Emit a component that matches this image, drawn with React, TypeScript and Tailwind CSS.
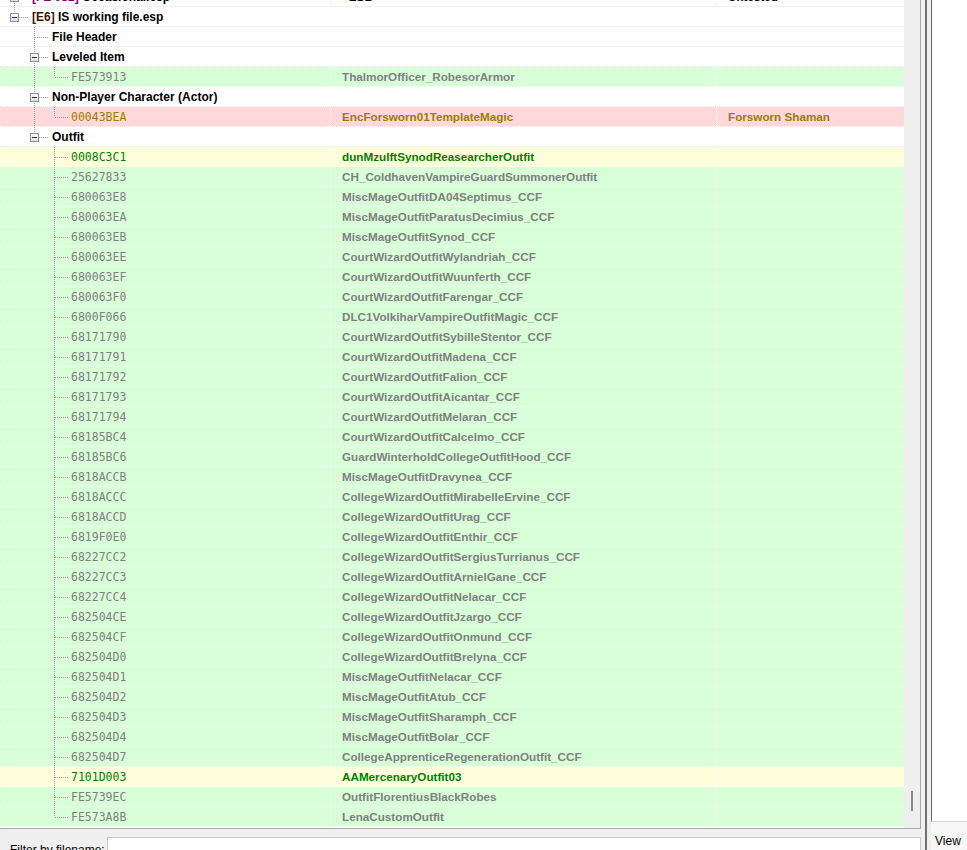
import React from 'react';

type Tone = 'white' | 'header' | 'green' | 'red' | 'yellow';

interface TreeRow {
  level: number;
  ancestors: boolean[];
  last: boolean;
  expander?: boolean;
  label?: React.ReactNode;
  id?: string;
  name?: string;
  extra?: string;
  tone: Tone;
}

const toneStyles: Record<Tone, { bg: string; sep: string; div: string; text: string }> = {
  white: { bg: 'bg-white', sep: 'border-[#e4e4e4]', div: 'border-[#e4e4e4]', text: 'text-black' },
  header: { bg: 'bg-white', sep: 'border-[#e4e4e4]', div: 'border-transparent', text: 'text-black' },
  green: { bg: 'bg-[#d9ffd9]', sep: 'border-white', div: 'border-white', text: 'text-[#808080]' },
  red: { bg: 'bg-[#ffd9d9]', sep: 'border-white', div: 'border-white', text: 'text-[#9b7d00]' },
  yellow: { bg: 'bg-[#ffffdc]', sep: 'border-white', div: 'border-white', text: 'text-[#008000]' },
};

const outfits: [string, string][] = [
  ['25627833', 'CH_ColdhavenVampireGuardSummonerOutfit'],
  ['680063E8', 'MiscMageOutfitDA04Septimus_CCF'],
  ['680063EA', 'MiscMageOutfitParatusDecimius_CCF'],
  ['680063EB', 'MiscMageOutfitSynod_CCF'],
  ['680063EE', 'CourtWizardOutfitWylandriah_CCF'],
  ['680063EF', 'CourtWizardOutfitWuunferth_CCF'],
  ['680063F0', 'CourtWizardOutfitFarengar_CCF'],
  ['6800F066', 'DLC1VolkiharVampireOutfitMagic_CCF'],
  ['68171790', 'CourtWizardOutfitSybilleStentor_CCF'],
  ['68171791', 'CourtWizardOutfitMadena_CCF'],
  ['68171792', 'CourtWizardOutfitFalion_CCF'],
  ['68171793', 'CourtWizardOutfitAicantar_CCF'],
  ['68171794', 'CourtWizardOutfitMelaran_CCF'],
  ['68185BC4', 'CourtWizardOutfitCalcelmo_CCF'],
  ['68185BC6', 'GuardWinterholdCollegeOutfitHood_CCF'],
  ['6818ACCB', 'MiscMageOutfitDravynea_CCF'],
  ['6818ACCC', 'CollegeWizardOutfitMirabelleErvine_CCF'],
  ['6818ACCD', 'CollegeWizardOutfitUrag_CCF'],
  ['6819F0E0', 'CollegeWizardOutfitEnthir_CCF'],
  ['68227CC2', 'CollegeWizardOutfitSergiusTurrianus_CCF'],
  ['68227CC3', 'CollegeWizardOutfitArnielGane_CCF'],
  ['68227CC4', 'CollegeWizardOutfitNelacar_CCF'],
  ['682504CE', 'CollegeWizardOutfitJzargo_CCF'],
  ['682504CF', 'CollegeWizardOutfitOnmund_CCF'],
  ['682504D0', 'CollegeWizardOutfitBrelyna_CCF'],
  ['682504D1', 'MiscMageOutfitNelacar_CCF'],
  ['682504D2', 'MiscMageOutfitAtub_CCF'],
  ['682504D3', 'MiscMageOutfitSharamph_CCF'],
  ['682504D4', 'MiscMageOutfitBolar_CCF'],
  ['682504D7', 'CollegeApprenticeRegenerationOutfit_CCF'],
];

const rows: TreeRow[] = [
  {
    level: 0,
    ancestors: [],
    last: false,
    expander: true,
    tone: 'white',
    label: (
      <>
        <span className="text-[#800080]">[FE 982]</span> Occasional.esp
      </>
    ),
    name: '<ESL>',
    extra: 'Untested',
  },
  {
    level: 0,
    ancestors: [],
    last: true,
    expander: true,
    tone: 'header',
    label: (
      <>
        <span className="text-[#3a1800]">[E6]</span> IS working file.esp
      </>
    ),
  },
  { level: 1, ancestors: [false], last: false, tone: 'header', label: 'File Header' },
  { level: 1, ancestors: [false], last: false, expander: true, tone: 'header', label: 'Leveled Item' },
  { level: 2, ancestors: [false, true], last: true, tone: 'green', id: 'FE573913', name: 'ThalmorOfficer_RobesorArmor' },
  { level: 1, ancestors: [false], last: false, expander: true, tone: 'header', label: 'Non-Player Character (Actor)' },
  {
    level: 2,
    ancestors: [false, true],
    last: true,
    tone: 'red',
    id: '00043BEA',
    name: 'EncForsworn01TemplateMagic',
    extra: 'Forsworn Shaman',
  },
  { level: 1, ancestors: [false], last: true, expander: true, tone: 'header', label: 'Outfit' },
  { level: 2, ancestors: [false, false], last: false, tone: 'yellow', id: '0008C3C1', name: 'dunMzulftSynodReasearcherOutfit' },
  ...outfits.map(([id, name]) => ({ level: 2, ancestors: [false, false], last: false, tone: 'green' as Tone, id, name })),
  { level: 2, ancestors: [false, false], last: false, tone: 'yellow', id: '7101D003', name: 'AAMercenaryOutfit03' },
  { level: 2, ancestors: [false, false], last: false, tone: 'green', id: 'FE5739EC', name: 'OutfitFlorentiusBlackRobes' },
  { level: 2, ancestors: [false, false], last: true, tone: 'green', id: 'FE573A8B', name: 'LenaCustomOutfit' },
];

const Ancestor = ({ on }: { on: boolean }) => (
  <svg width="20" height="20" className="shrink-0 self-start" shapeRendering="crispEdges">
    {on && <line x1="10.5" y1="0" x2="10.5" y2="20" stroke="#a0a0a0" strokeDasharray="1 1" />}
  </svg>
);

const Connector = ({ last, expander }: { last: boolean; expander?: boolean }) => (
  <svg width="24" height="20" className="shrink-0 self-start" shapeRendering="crispEdges">
    <defs>
      <linearGradient id="boxfill" x1="0" y1="0" x2="0" y2="1">
        <stop offset="0" stopColor="#ffffff" />
        <stop offset="1" stopColor="#dcdcdc" />
      </linearGradient>
    </defs>
    <line x1="10.5" y1="0" x2="10.5" y2="10" stroke="#a0a0a0" strokeDasharray="1 1" />
    {!last && <line x1="10.5" y1="10" x2="10.5" y2="20" stroke="#a0a0a0" strokeDasharray="1 1" />}
    <line x1="11" y1="10.5" x2="24" y2="10.5" stroke="#a0a0a0" strokeDasharray="1 1" />
    {expander && (
      <>
        <rect x="6.5" y="6.5" width="8" height="8" fill="url(#boxfill)" stroke="#8e8f8f" />
        <line x1="8" y1="10.5" x2="13" y2="10.5" stroke="#25324a" />
      </>
    )}
  </svg>
);

const Row = ({ row }: { row: TreeRow }) => {
  const t = toneStyles[row.tone];
  return (
    <div className={`flex h-5 border-b border-dotted ${t.bg} ${t.sep}`}>
      <div className="flex w-[330px] shrink-0 items-center pl-1">
        {row.ancestors.map((on, i) => (
          <Ancestor key={i} on={on} />
        ))}
        <Connector last={row.last} expander={row.expander} />
        {row.label !== undefined ? (
          <span className="whitespace-nowrap pl-[4px] text-[12px] font-bold text-black">{row.label}</span>
        ) : (
          <span className={`mt-[2px] pl-[3px] font-['DejaVu_Sans_Mono',monospace] text-[11.5px] ${t.text}`}>{row.id}</span>
        )}
      </div>
      <div className={`flex w-[386px] shrink-0 items-center border-l border-dotted pl-[11px] ${t.div}`}>
        <span className={`whitespace-nowrap text-[11.7px] font-bold ${t.text}`}>{row.name}</span>
      </div>
      <div className={`flex flex-1 items-center border-l border-dotted pl-[11px] ${t.div}`}>
        <span className={`whitespace-nowrap text-[11.7px] font-bold ${t.text}`}>{row.extra}</span>
      </div>
    </div>
  );
};

export default function App() {
  return (
    <div className="flex h-[850px] w-[967px] overflow-hidden bg-[#f0f0f0] font-['Liberation_Sans',Arial,sans-serif]">
      <div className="flex w-[921px] shrink-0 flex-col">
        <div className="flex h-[829px] shrink-0 border-b border-r border-[#a8a8a8] bg-white">
          <div className="w-[904px] overflow-hidden">
            <div className="-mt-[13px]">
              {rows.map((r, i) => (
                <Row key={i} row={r} />
              ))}
            </div>
          </div>
          <div className="flex w-4 flex-col items-center justify-end bg-[#efefef] pb-[17px]">
            <div className="h-5 w-[2px] bg-[#8a8a8a]" />
          </div>
        </div>
        <div className="flex items-start pl-[10px] pt-[8px]">
          <span className="w-[97px] pt-[4px] text-[12px] text-black">Filter by filename:</span>
          <div className="h-[22px] flex-1 border border-[#c8c8c8] bg-white" />
        </div>
      </div>
      <div className="w-1 shrink-0" />
      <div className="w-[2px] shrink-0 bg-[#707070]" />
      <div className="w-1 shrink-0" />
      <div className="flex flex-1 flex-col">
        <div className="h-[833px] border-b border-l border-b-[#d8d8d8] border-l-[#6a6a6a] bg-white" />
        <div className="bg-[#f7f7f7] pl-[4px] pt-[10px] text-[12px] text-black">View</div>
      </div>
    </div>
  );
}
